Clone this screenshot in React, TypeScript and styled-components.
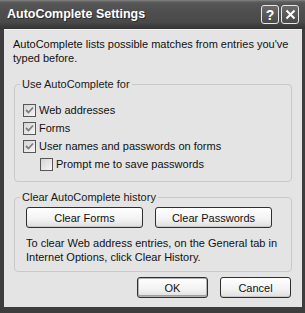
import React, { useState } from 'react';
import styled, { createGlobalStyle } from 'styled-components';

const GlobalStyle = createGlobalStyle`
  html, body {
    margin: 0;
    padding: 0;
    background: #ffffff;
  }
`;

type Option = {
  key: string;
  label: string;
  indent?: boolean;
};

const options: Option[] = [
  { key: 'web', label: 'Web addresses' },
  { key: 'forms', label: 'Forms' },
  { key: 'users', label: 'User names and passwords on forms' },
  { key: 'prompt', label: 'Prompt me to save passwords', indent: true },
];

export default function App() {
  const [checked, setChecked] = useState<{ [key: string]: boolean }>({
    web: true,
    forms: true,
    users: true,
    prompt: false,
  });

  const toggle = (key: string) => {
    setChecked({ ...checked, [key]: !checked[key] });
  };

  return (
    <>
      <GlobalStyle />
      <Window>
        <TitleBar>
          <Title>AutoComplete Settings</Title>
          <TitleButtons>
            <CaptionButton>?</CaptionButton>
            <CaptionButton>
              <svg width="11" height="11" viewBox="0 0 11 11">
                <path d="M1.5 1.5 L9.5 9.5 M9.5 1.5 L1.5 9.5" stroke="#fff" strokeWidth="2" />
              </svg>
            </CaptionButton>
          </TitleButtons>
        </TitleBar>
        <Body>
          <Intro>AutoComplete lists possible matches from entries you've typed before.</Intro>

          <Group>
            <Legend>Use AutoComplete for</Legend>
            <CheckList>
              {options.map((o) => (
                <CheckRow key={o.key} $indent={o.indent} onClick={() => toggle(o.key)}>
                  <Box>
                    {checked[o.key] && (
                      <svg width="9" height="9" viewBox="0 0 9 9">
                        <path d="M1 4 L3.5 6.5 L8 1.5" stroke="#7d7d7d" strokeWidth="1.8" fill="none" />
                      </svg>
                    )}
                  </Box>
                  <span>{o.label}</span>
                </CheckRow>
              ))}
            </CheckList>
          </Group>

          <HistoryGroup>
            <Legend>Clear AutoComplete history</Legend>
            <HistoryContent>
              <ClearRow>
                <Button $width={117}>Clear Forms</Button>
                <Button $width={117}>Clear Passwords</Button>
              </ClearRow>
              <Note>
                To clear Web address entries, on the General tab in Internet Options, click Clear History.
              </Note>
            </HistoryContent>
          </HistoryGroup>

          <Footer>
            <Button $width={71} $primary>
              OK
            </Button>
            <Button $width={71}>Cancel</Button>
          </Footer>
        </Body>
      </Window>
    </>
  );
}

const Window = styled.div`
  width: 305px;
  height: 313px;
  display: flex;
  flex-direction: column;
  background: #3d3d3d;
  font-family: 'Liberation Sans', Arial, sans-serif;
  font-size: 11px;
  color: #111;
  overflow: hidden;
`;

const TitleBar = styled.div`
  height: 29px;
  flex-shrink: 0;
  display: flex;
  align-items: center;
  justify-content: space-between;
  padding: 0 6px 1px 7px;
  box-sizing: border-box;
  background: linear-gradient(
    to bottom,
    #8a8a8a 0px,
    #6a6a6a 1px,
    #565656 3px,
    #4e4e4e 12px,
    #4a4a4a 22px,
    #3c3c3c 26px,
    #353535 29px
  );
`;

const Title = styled.div`
  color: #ffffff;
  font-weight: bold;
  font-size: 12.5px;
  text-shadow: 1px 1px 0 #2a2a2a;
`;

const TitleButtons = styled.div`
  display: flex;
  gap: 2px;
  margin-top: 1px;
`;

const CaptionButton = styled.div`
  width: 16px;
  height: 17px;
  border: 1px solid #e8e8e8;
  border-radius: 3px;
  background: linear-gradient(to bottom, #6a6a6a, #4a4a4a);
  color: #ffffff;
  font-weight: bold;
  font-size: 14px;
  display: flex;
  align-items: center;
  justify-content: center;
`;

const Body = styled.div`
  flex: 1;
  margin: 0 3px 6px 4px;
  background: #e4e4e4;
  border-top: 1px solid #f2f2f2;
  padding: 7px 10px 0 10px;
  display: flex;
  flex-direction: column;
`;

const Intro = styled.div`
  margin-left: -1px;
  line-height: 14px;
`;

const Group = styled.fieldset`
  margin: 13px 0 0 0;
  padding: 0;
  border: 1px solid #c9c9c9;
  border-radius: 4px;
  min-width: 0;
`;

const HistoryGroup = styled(Group)`
  margin-top: 9px;
`;

const Legend = styled.legend`
  padding: 0 2px;
  margin-left: 5px;
  line-height: 13px;
  color: #1a1a1a;
`;

const CheckList = styled.div`
  display: flex;
  flex-direction: column;
  padding: 10px 0 8px 8px;
`;

const CheckRow = styled.div<{ $indent?: boolean }>`
  display: flex;
  align-items: center;
  gap: 3px;
  height: 18px;
  margin-left: ${({ $indent }) => ($indent ? '17px' : '0')};
  cursor: default;
`;

const Box = styled.span`
  width: 11px;
  height: 11px;
  border: 1px solid #575757;
  background: linear-gradient(135deg, #d4d4d4, #f6f6f6);
  display: flex;
  align-items: center;
  justify-content: center;
`;

const HistoryContent = styled.div`
  padding: 3px 12px 7px 11px;
`;

const ClearRow = styled.div`
  display: flex;
  gap: 12px;
`;

const Button = styled.button<{ $width: number; $primary?: boolean }>`
  width: ${({ $width }) => $width}px;
  height: 21px;
  padding: 0;
  font-family: inherit;
  font-size: 11px;
  color: #111;
  border: 1px solid #2f2f2f;
  border-radius: 3px;
  background: linear-gradient(to bottom, #ffffff 0%, #f2f2f2 60%, #dedede 100%);
  box-shadow: ${({ $primary }) =>
    $primary ? 'inset 0 0 0 1px #b4b4b4, inset 0 -1px 0 1px #a0a0a0' : 'inset 0 -1px 0 #c8c8c8'};
`;

const Note = styled.div`
  margin-top: 8px;
  line-height: 14px;
`;

const Footer = styled.div`
  display: flex;
  justify-content: flex-end;
  gap: 12px;
  margin-top: 5px;
  padding-right: 1px;
`;
